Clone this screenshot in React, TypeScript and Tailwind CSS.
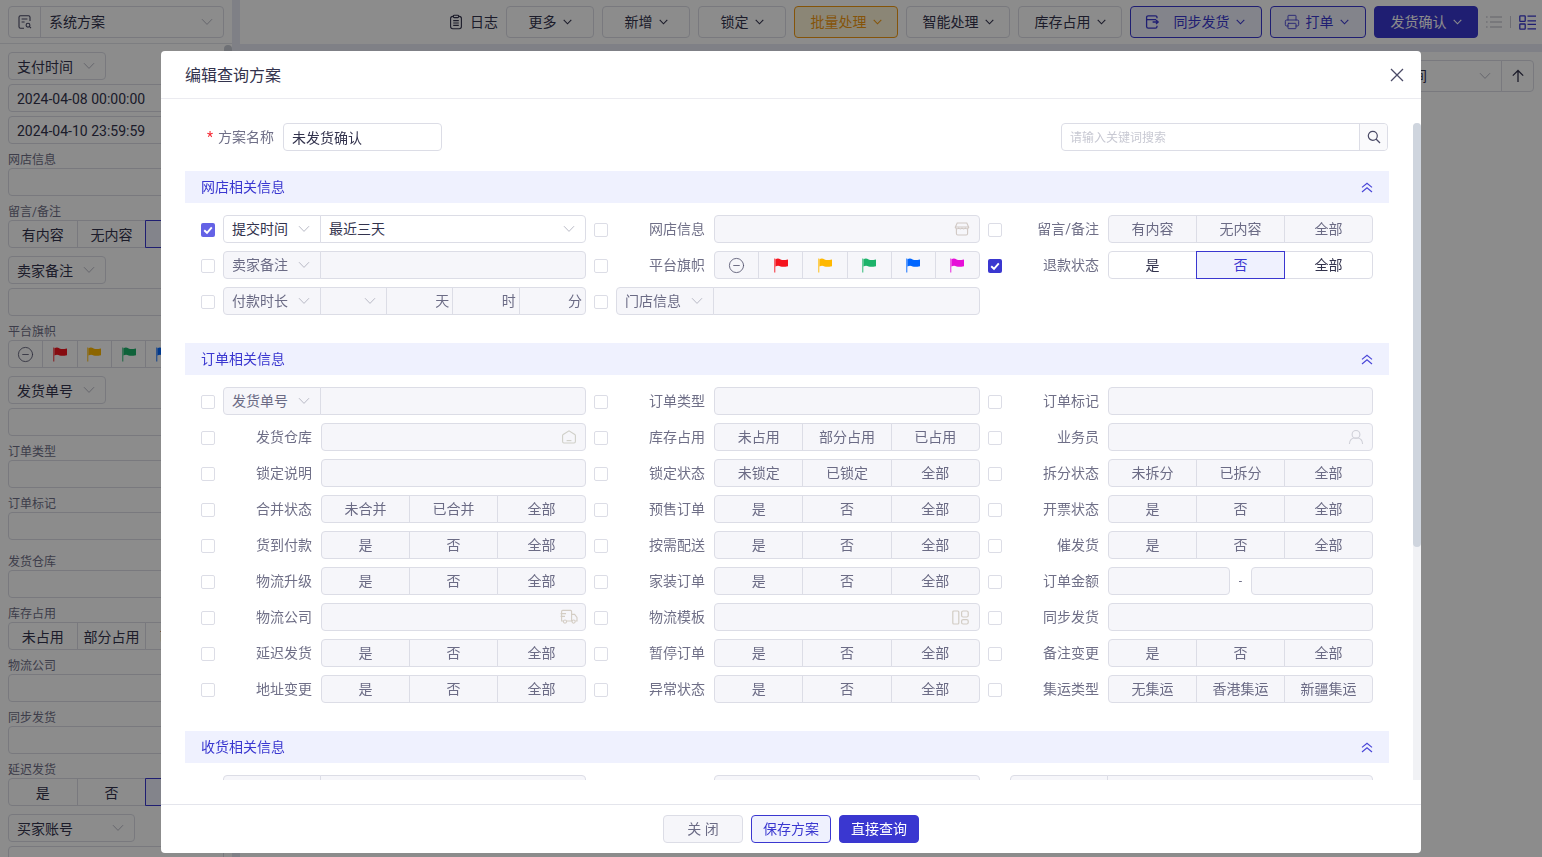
import React from "react";
import { Printer, CircleMinus } from "lucide-react";

const FONT = "[font-family:'Roboto','Noto_Sans_CJK_SC',sans-serif]";

function Chevron({ className = "text-[#b9bac6]" }: { className?: string }) {
  return (
    <svg width="12" height="8" viewBox="0 0 12 8" fill="none" stroke="currentColor" strokeWidth="1" className={`shrink-0 ${className}`}>
      <path d="M1 1.2L6 6.4L11 1.2" />
    </svg>
  );
}

function SmallChevron() {
  return (
    <svg width="9" height="6" viewBox="0 0 9 6" fill="none" stroke="currentColor" strokeWidth="1.1" className="shrink-0">
      <path d="M0.7 0.8L4.5 4.8L8.3 0.8" />
    </svg>
  );
}

function Flag({ color, size = 16 }: { color: string; size?: number }) {
  return (
    <svg width={size} height={size} viewBox="0 0 16 16">
      <rect x="1" y="1.5" width="1.4" height="14" fill={color} opacity="0.65" />
      <path d="M2.4 2.2C4.5 1.2 6 1.6 7.6 2.4C9.6 3.2 11.4 3 15 2.4L15 9.2C11.4 10 9.6 10 7.6 9.4C6 8.6 4.5 8.4 2.4 9.4Z" fill={color} />
    </svg>
  );
}

function Check({ checked, tone = "dark" }: { checked?: boolean; tone?: "dark" | "light" }) {
  if (checked) {
    return (
      <span className={`mt-[2px] flex h-[14px] w-[14px] shrink-0 items-center justify-center rounded-[2px] ${tone === "light" ? "bg-[#6462e6]" : "bg-[#3a37d0]"}`}>
        <svg width="10" height="10" viewBox="0 0 10 10" fill="none">
          <path d="M1.2 5.2L4 7.8L8.8 2.4" stroke="#fff" strokeWidth="1.9" />
        </svg>
      </span>
    );
  }
  return <span className="mt-[2px] h-[14px] w-[14px] shrink-0 rounded-[2px] border border-[#dcdde6] bg-white" />;
}

function Seg({ items, active, enabled, className = "", cellClass = "" }: { items: React.ReactNode[]; active?: number; enabled?: boolean; className?: string; cellClass?: string }) {
  return (
    <div className={`flex h-7 ${className}`}>
      {items.map((it, i) => (
        <div
          key={i}
          className={`flex flex-1 items-center justify-center border text-[14px] ${cellClass} ${i > 0 ? "-ml-px" : ""} ${i === 0 ? "rounded-l-[4px]" : ""} ${i === items.length - 1 ? "rounded-r-[4px]" : ""} ${
            active === i
              ? "relative z-10 border-[#3a37d0] bg-[#eff1fe] text-[#3a37d0]"
              : enabled
              ? "border-[#dcdde6] bg-white text-[#33334d]"
              : "border-[#dcdde6] bg-[#f6f6fa] text-[#6b6b85]"
          }`}
        >
          {it}
        </div>
      ))}
    </div>
  );
}

function Inp({ icon, className = "" }: { icon?: React.ReactNode; className?: string }) {
  return (
    <div className={`flex h-7 flex-1 items-center justify-end rounded-[4px] border border-[#dcdde6] bg-[#f6f6fa] pr-2 ${className}`}>
      {icon}
    </div>
  );
}

function SelectHead({ label, enabled }: { label: string; enabled?: boolean }) {
  return (
    <div className={`flex h-7 w-[98px] shrink-0 items-center justify-between rounded-l-[4px] border border-[#dcdde6] pl-2 pr-[10px] text-[14px] ${enabled ? "bg-white text-[#33334d]" : "bg-[#f6f6fa] text-[#6b6b85]"}`}>
      <span>{label}</span>
      <Chevron />
    </div>
  );
}

function SelectField({ label, value, enabled, children }: { label: string; value?: string; enabled?: boolean; children?: React.ReactNode }) {
  return (
    <div className="flex h-7 flex-1">
      <SelectHead label={label} enabled={enabled} />
      {children ?? (
        <div className={`-ml-px flex h-7 flex-1 items-center justify-between rounded-r-[4px] border border-[#dcdde6] pl-2 pr-[10px] text-[14px] ${enabled ? "bg-white text-[#33334d]" : "bg-[#f6f6fa]"}`}>
          <span>{value}</span>
          {enabled && <Chevron />}
        </div>
      )}
    </div>
  );
}

function Cell({ label, checked, tone, select, children }: { label?: string; checked?: boolean; tone?: "dark" | "light"; select?: boolean; children: React.ReactNode }) {
  return (
    <div className="flex h-7 items-center">
      <Check checked={checked} tone={tone} />
      <div className="ml-2 flex flex-1">
        {!select && (
          <div className="flex h-7 w-[98px] shrink-0 items-center justify-end pr-[9px] text-[14px] text-[#6f6f87]">{label}</div>
        )}
        {children}
      </div>
    </div>
  );
}

const YN = ["是", "否", "全部"];

function Band({ title }: { title: string }) {
  return (
    <div className="flex h-8 items-center justify-between bg-[#eff1fe] px-4 text-[14px] text-[#3a37d0]">
      <span>{title}</span>
      <svg width="12" height="11" viewBox="0 0 12 11" fill="none" stroke="#4a47d8" strokeWidth="1.2">
        <path d="M1 5.4L6 1.2L11 5.4M1 10L6 5.8L11 10" />
      </svg>
    </div>
  );
}

function Section({ title, children }: { title: string; children: React.ReactNode }) {
  return (
    <section className="mb-7">
      <Band title={title} />
      <div className="grid grid-cols-[385px_386px_385px] gap-x-2 gap-y-2 px-4 pt-3">{children}</div>
    </section>
  );
}

function StoreIcon() {
  return (
    <svg width="16" height="16" viewBox="0 0 16 16" fill="none" stroke="#d0c8c4" strokeWidth="1.1" className="mr-[1px]">
      <path d="M3.2 2h9.6L14.6 6H1.4Z" />
      <path d="M1.4 6c0 2 2.2 2.2 3.3 1c1 1.2 2.3 1.2 3.3 0c1 1.2 2.3 1.2 3.3 0c1.1 1.2 3.3 1 3.3-1" />
      <path d="M2.4 8v4.6c0 .8.5 1.4 1.4 1.4h8.4c.9 0 1.4-.6 1.4-1.4V8" />
    </svg>
  );
}

function WarehouseIcon() {
  return (
    <svg width="16" height="16" viewBox="0 0 16 16" fill="none" stroke="#cfcfc8" strokeWidth="1.1">
      <path d="M1.6 6.6c0-.5.2-.8.6-1.1L8 1.8l5.8 3.7c.4.3.6.6.6 1.1v6c0 .8-.6 1.4-1.4 1.4H3c-.8 0-1.4-.6-1.4-1.4Z" />
      <path d="M5.6 11.6h4.8" />
    </svg>
  );
}

function TruckIcon() {
  return (
    <svg width="18" height="16" viewBox="0 0 18 16" fill="none" stroke="#d4cdc4" strokeWidth="1.1" className="-mr-px">
      <path d="M3 12H1.6V2.4c0-.6.4-1 1-1h8c.6 0 1 .4 1 1V12H7" />
      <path d="M0.6 4.6H6M0.6 7.4H5" />
      <path d="M11.6 5.4h3l2.4 3V12h-1.6" />
      <path d="M11.6 12h.6" />
      <circle cx="5" cy="12.6" r="1.6" />
      <circle cx="13.6" cy="12.6" r="1.6" />
    </svg>
  );
}

function UserIcon() {
  return (
    <svg width="16" height="16" viewBox="0 0 16 16" fill="none" stroke="#cfd0d8" strokeWidth="1.1">
      <circle cx="8" cy="5.4" r="3.9" />
      <path d="M1.4 15c0-3.6 2.4-6 5-6h3.2c2.6 0 5 2.4 5 6" />
    </svg>
  );
}

function TemplateIcon() {
  return (
    <svg width="17" height="15" viewBox="0 0 17 15" fill="none" stroke="#d2ccc4" strokeWidth="1.2" className="mr-[2px]">
      <rect x="0.8" y="1" width="6" height="13" rx="1" />
      <rect x="9.6" y="1" width="6.6" height="6" rx="1.5" />
      <rect x="9.6" y="9.6" width="6.6" height="4.4" rx="1.5" />
    </svg>
  );
}

function FlagSeg({ enabled, className = "" }: { enabled?: boolean; className?: string }) {
  const colors = ["#f5141e", "#ffb800", "#1cb36a", "#0066ff", "#e60ed8"];
  return (
    <Seg
      enabled={enabled}
      className={className}
      items={[
        <CircleMinus key="m" size={17} strokeWidth={1.2} className="text-[#55556f]" />,
        ...colors.map((c) => <Flag key={c} color={c} />),
      ]}
    />
  );
}

function SideLabel({ children }: { children: React.ReactNode }) {
  return <div className="mb-[-3px] mt-[9px] h-[14px] text-[12px] leading-[14px] text-[#6f6f87]">{children}</div>;
}

function SideInput({ children }: { children?: React.ReactNode }) {
  return (
    <div className="mt-1 flex h-7 items-center rounded-[4px] border border-[#dcdde6] bg-white pl-2 pt-[2px] text-[14px] text-[#33334d]">{children}</div>
  );
}

function SideSelect({ label, width = "w-[98px]" }: { label: string; width?: string }) {
  return (
    <div className={`mt-2 flex h-7 ${width} items-center justify-between rounded-[4px] border border-[#dcdde6] bg-white pl-2 pr-[10px] text-[14px] text-[#33334d]`}>
      <span className="pt-[2px]">{label}</span>
      <Chevron />
    </div>
  );
}

function SideSeg({ items, active }: { items: string[]; active?: number }) {
  return <Seg enabled items={items} active={active} className="mt-1 w-[207px]" cellClass="pt-[2px]" />;
}

function Sidebar() {
  return (
    <aside className="relative flex h-full w-[232px] shrink-0 flex-col overflow-hidden bg-white">
      <div className="h-[44px] shrink-0 border-b border-[#e4e5ec] px-2 pt-[6px]">
        <div className="flex h-8 rounded-[4px] border border-[#dcdde6] text-[14px] text-[#33334d]">
          <div className="flex w-8 items-center justify-center border-r border-[#dcdde6]">
            <svg width="16" height="16" viewBox="0 0 16 16" fill="none" stroke="#4a4a66" strokeWidth="1.1">
              <path d="M7 14.2H3.5C2.6 14.2 2 13.6 2 12.7V3.3C2 2.4 2.6 1.8 3.5 1.8h8C12.4 1.8 13 2.4 13 3.3V7" />
              <path d="M4.6 5h5.8M4.6 8h3" />
              <circle cx="11" cy="11.2" r="1.9" />
              <path d="M12.5 12.7L14 14.2" />
            </svg>
          </div>
          <div className="flex flex-1 items-center justify-between pl-2 pr-[10px]">
            <span>系统方案</span>
            <Chevron />
          </div>
        </div>
      </div>
      <div className="px-2">
        <SideSelect label="支付时间" />
        <SideInput>2024-04-08 00:00:00</SideInput>
        <SideInput>2024-04-10 23:59:59</SideInput>
        <SideLabel>网店信息</SideLabel>
        <SideInput />
        <SideLabel>留言/备注</SideLabel>
        <SideSeg items={["有内容", "无内容", "全部"]} active={2} />
        <SideSelect label="卖家备注" />
        <SideInput />
        <SideLabel>平台旗帜</SideLabel>
        <FlagSeg enabled className="mt-1 w-[207px]" />
        <SideSelect label="发货单号" />
        <SideInput />
        <SideLabel>订单类型</SideLabel>
        <SideInput />
        <SideLabel>订单标记</SideLabel>
        <SideInput />
        <div className="h-[6px]" />
        <SideLabel>发货仓库</SideLabel>
        <SideInput />
        <SideLabel>库存占用</SideLabel>
        <SideSeg items={["未占用", "部分占用", "已占用"]} />
        <SideLabel>物流公司</SideLabel>
        <SideInput />
        <SideLabel>同步发货</SideLabel>
        <SideInput />
        <SideLabel>延迟发货</SideLabel>
        <SideSeg items={["是", "否", "全部"]} active={2} />
        <SideSelect label="买家账号" width="w-[127px]" />
        <SideInput />
      </div>
      <div className="absolute right-0 top-[45px] h-[40px] w-2 rounded-full bg-[#c8ccd6]" />
    </aside>
  );
}

function ToolBtn({ label, width, variant = "default", icon }: { label: string; width: string; variant?: "default" | "amber" | "outline" | "solid"; icon?: React.ReactNode }) {
  const styles = {
    default: "border-[#dcdde6] bg-white text-[#33334d]",
    amber: "border-[#f39a12] bg-[#fdf5d8] text-[#f39a12]",
    outline: "border-[#3a37d0] bg-[#eff1fe] text-[#3a37d0]",
    solid: "border-[#3a37d0] bg-[#3a37d0] text-white",
  }[variant];
  return (
    <div className={`flex h-8 ${width} items-center justify-center gap-[6px] rounded-[4px] border text-[14px] ${styles}`}>
      {icon}
      <span>{label}</span>
      <SmallChevron />
    </div>
  );
}

function Main() {
  return (
    <main className="flex h-full flex-1 flex-col">
      <div className="flex h-[44px] shrink-0 items-start justify-end gap-2 bg-white pl-2 pr-[6px] pt-[6px]">
        <div className="flex h-8 items-center gap-[6px] text-[14px] text-[#33334d]">
          <svg width="16" height="16" viewBox="0 0 16 16" fill="none" stroke="#33334d" strokeWidth="1.1">
            <rect x="2.6" y="2.4" width="10.8" height="12.4" rx="2.2" />
            <rect x="5.4" y="1.2" width="5.2" height="2.4" rx="0.8" fill="#fff" />
            <path d="M5.2 6.6h5.6M5.2 9h5.6M5.2 11.4h5.6" />
          </svg>
          <span>日志</span>
        </div>
        <ToolBtn label="更多" width="w-[88px]" />
        <ToolBtn label="新增" width="w-[88px]" />
        <ToolBtn label="锁定" width="w-[88px]" />
        <ToolBtn label="批量处理" width="w-[104px]" variant="amber" />
        <ToolBtn label="智能处理" width="w-[104px]" />
        <ToolBtn label="库存占用" width="w-[104px]" />
        <ToolBtn
          label="同步发货"
          width="w-[132px] pr-1"
          variant="outline"
          icon={
            <svg width="16" height="16" viewBox="0 0 16 16" fill="none" stroke="#3a37d0" strokeWidth="1.3" className="mr-2">
              <path d="M13 4.2V3.4C13 2.4 12.4 1.8 11.4 1.8H4.2C3.2 1.8 2.6 2.4 2.6 3.4v9.2c0 1 .6 1.6 1.6 1.6h7.2c1 0 1.6-.6 1.6-1.6v-.8" />
              <path d="M2.6 5.6H12M8.6 8h5.6M12 6l2.2 2L12 10" />
            </svg>
          }
        />
        <ToolBtn label="打单" width="w-[96px] pr-1" variant="outline" icon={<Printer size={16} strokeWidth={1.3} />} />
        <ToolBtn label="发货确认" width="w-[104px]" variant="solid" />
        <div className="flex h-8 items-center gap-2">
          <svg width="16" height="14" viewBox="0 0 16 14" fill="none" stroke="#b5b6c2" strokeWidth="1.2">
            <path d="M0 2h1.6M0 7h1.6M0 12h1.6M4 2h12M4 7h12M4 12h12" />
          </svg>
          <div className="h-3 w-px bg-[#c8c9d3]" />
          <svg width="17" height="15" viewBox="0 0 17 15" fill="none" stroke="#3a37d0" strokeWidth="1.3">
            <rect x="0.8" y="0.8" width="5.4" height="5.6" rx="0.6" />
            <rect x="0.8" y="9" width="5.4" height="5.2" rx="0.6" />
            <path d="M8.5 1.2H17M8.5 5.8H17M8.5 9.4H17M8.5 13.8H17" />
          </svg>
        </div>
      </div>
      <div className="h-2 shrink-0 bg-[#e8e9f5]" />
      <div className="flex-1 bg-white">
        <div className="mr-2 mt-2 flex justify-end">
          <div className="flex h-8 w-[112px] items-center justify-between rounded-l-[4px] border border-[#dcdde6] pl-2 pr-[10px] text-[14px] text-[#33334d]">
            <span>时间</span>
            <Chevron />
          </div>
          <div className="-ml-px flex h-8 w-[33px] items-center justify-center rounded-r-[4px] border border-[#dcdde6] text-[#33334d]">
            <svg width="14" height="14" viewBox="0 0 14 14" fill="none" stroke="currentColor" strokeWidth="1.3">
              <path d="M7 13V1.5M1.8 6.6L7 1.5L12.2 6.6" />
            </svg>
          </div>
        </div>
      </div>
    </main>
  );
}

function BlankSelect() {
  return (
    <div className="flex h-7 flex-1">
      <div className="h-7 w-[98px] rounded-l-[4px] border border-[#dcdde6] bg-[#f6f6fa]" />
      <div className="-ml-px h-7 flex-1 rounded-r-[4px] border border-[#dcdde6] bg-[#f6f6fa]" />
    </div>
  );
}

function Modal() {
  return (
    <div className="fixed inset-0 z-50 bg-black/45">
      <div className="absolute left-[161px] top-[51px] flex h-[802px] w-[1260px] flex-col rounded-[4px] bg-white">
        <div className="flex h-[48px] shrink-0 items-center justify-between border-b border-[#ebebf0] pl-6 pr-[17px] text-[16px] text-[#33334d]">
          <span className="pt-[2px]">编辑查询方案</span>
          <svg width="14" height="14" viewBox="0 0 14 14" fill="none" stroke="#4a4a66" strokeWidth="1.3">
            <path d="M1 1L13 13M13 1L1 13" />
          </svg>
        </div>
        <div className="relative min-h-0 flex-1 pb-6 pl-6 pr-8 pt-6">
          <div className="h-full overflow-hidden">
            <div className="mb-5 flex h-7 items-center justify-between pr-px">
              <div className="flex items-center">
                <span className="ml-[22px] mr-[5px] text-[14px] leading-none text-[#f5222d]">*</span>
                <span className="mr-[9px] text-[14px] text-[#6f6f87]">方案名称</span>
                <div className="flex h-7 w-[159px] items-center rounded-[4px] border border-[#dcdde6] pl-2 pt-[2px] text-[14px] text-[#33334d]">未发货确认</div>
              </div>
              <div className="flex h-7 w-[327px] rounded-[4px] border border-[#dcdde6]">
                <div className="flex flex-1 items-center pl-2 pt-[2px] text-[12px] text-[#c8c9d3]">请输入关键词搜索</div>
                <div className="flex w-[28px] items-center justify-center rounded-r-[4px] border-l border-[#dcdde6] bg-[#fafafc]">
                  <svg width="14" height="14" viewBox="0 0 14 14" fill="none" stroke="#4a4a66" strokeWidth="1.2">
                    <circle cx="5.8" cy="5.8" r="4.5" />
                    <path d="M9 9L13 13" />
                  </svg>
                </div>
              </div>
            </div>

            <Section title="网店相关信息">
              <Cell select checked tone="light">
                <SelectField label="提交时间" value="最近三天" enabled />
              </Cell>
              <Cell label="网店信息">
                <Inp icon={<StoreIcon />} />
              </Cell>
              <Cell label="留言/备注">
                <Seg items={["有内容", "无内容", "全部"]} className="flex-1" />
              </Cell>

              <Cell select>
                <SelectField label="卖家备注" />
              </Cell>
              <Cell label="平台旗帜">
                <FlagSeg className="flex-1" />
              </Cell>
              <Cell label="退款状态" checked>
                <Seg items={YN} enabled active={1} className="flex-1" />
              </Cell>

              <Cell select>
                <SelectField label="付款时长">
                  <div className="-ml-px flex h-7 flex-1">
                    <div className="flex w-[67px] items-center justify-end border border-[#dcdde6] bg-[#f6f6fa] pr-[10px]">
                      <Chevron />
                    </div>
                    {["天", "时", "分"].map((u, i) => (
                      <div key={u} className={`-ml-px flex flex-1 items-center justify-end border border-[#dcdde6] bg-[#f6f6fa] pr-[3px] text-[14px] text-[#6b6b85] ${i === 2 ? "rounded-r-[4px]" : ""}`}>
                        {u}
                      </div>
                    ))}
                  </div>
                </SelectField>
              </Cell>
              <Cell select>
                <SelectField label="门店信息" />
              </Cell>
              <div />
            </Section>

            <Section title="订单相关信息">
              <Cell select><SelectField label="发货单号" /></Cell>
              <Cell label="订单类型"><Inp /></Cell>
              <Cell label="订单标记"><Inp /></Cell>

              <Cell label="发货仓库"><Inp icon={<WarehouseIcon />} /></Cell>
              <Cell label="库存占用"><Seg items={["未占用", "部分占用", "已占用"]} className="flex-1" /></Cell>
              <Cell label="业务员"><Inp icon={<UserIcon />} /></Cell>

              <Cell label="锁定说明"><Inp /></Cell>
              <Cell label="锁定状态"><Seg items={["未锁定", "已锁定", "全部"]} className="flex-1" /></Cell>
              <Cell label="拆分状态"><Seg items={["未拆分", "已拆分", "全部"]} className="flex-1" /></Cell>

              <Cell label="合并状态"><Seg items={["未合并", "已合并", "全部"]} className="flex-1" /></Cell>
              <Cell label="预售订单"><Seg items={YN} className="flex-1" /></Cell>
              <Cell label="开票状态"><Seg items={YN} className="flex-1" /></Cell>

              <Cell label="货到付款"><Seg items={YN} className="flex-1" /></Cell>
              <Cell label="按需配送"><Seg items={YN} className="flex-1" /></Cell>
              <Cell label="催发货"><Seg items={YN} className="flex-1" /></Cell>

              <Cell label="物流升级"><Seg items={YN} className="flex-1" /></Cell>
              <Cell label="家装订单"><Seg items={YN} className="flex-1" /></Cell>
              <Cell label="订单金额">
                <div className="flex flex-1 items-center">
                  <Inp />
                  <span className="w-[21px] text-center text-[12px] text-[#6f6f87]">-</span>
                  <Inp />
                </div>
              </Cell>

              <Cell label="物流公司"><Inp icon={<TruckIcon />} /></Cell>
              <Cell label="物流模板"><Inp icon={<TemplateIcon />} /></Cell>
              <Cell label="同步发货"><Inp /></Cell>

              <Cell label="延迟发货"><Seg items={YN} className="flex-1" /></Cell>
              <Cell label="暂停订单"><Seg items={YN} className="flex-1" /></Cell>
              <Cell label="备注变更"><Seg items={YN} className="flex-1" /></Cell>

              <Cell label="地址变更"><Seg items={YN} className="flex-1" /></Cell>
              <Cell label="异常状态"><Seg items={YN} className="flex-1" /></Cell>
              <Cell label="集运类型"><Seg items={["无集运", "香港集运", "新疆集运"]} className="flex-1" /></Cell>
            </Section>

            <Section title="收货相关信息">
              <Cell select><BlankSelect /></Cell>
              <Cell><Inp /></Cell>
              <Cell select><BlankSelect /></Cell>
            </Section>
          </div>
          <div className="absolute bottom-6 right-0 top-6 w-2 rounded-t-[4px] bg-[#f1f2f5]">
            <div className="h-[424px] rounded-[4px] bg-[#cfd5de]" />
          </div>
        </div>
        <div className="flex h-[49px] shrink-0 items-center justify-center gap-2 border-t border-[#e4e5ec] text-[14px]">
          <div className="flex h-7 w-20 items-center justify-center rounded-[4px] border border-[#dcdde6] bg-[#f6f6fa] text-[#6b6b85]">关 闭</div>
          <div className="flex h-7 w-20 items-center justify-center rounded-[4px] border border-[#3a37d0] bg-[#eff1fe] text-[#3a37d0]">保存方案</div>
          <div className="flex h-7 w-20 items-center justify-center rounded-[4px] border border-[#3a37d0] bg-[#3a37d0] text-white">直接查询</div>
        </div>
      </div>
    </div>
  );
}

export default function App() {
  return (
    <div className={`flex h-screen w-screen overflow-hidden bg-[#e8e9f5] ${FONT}`}>
      <Sidebar />
      <div className="w-2 shrink-0" />
      <Main />
      <Modal />
    </div>
  );
}
